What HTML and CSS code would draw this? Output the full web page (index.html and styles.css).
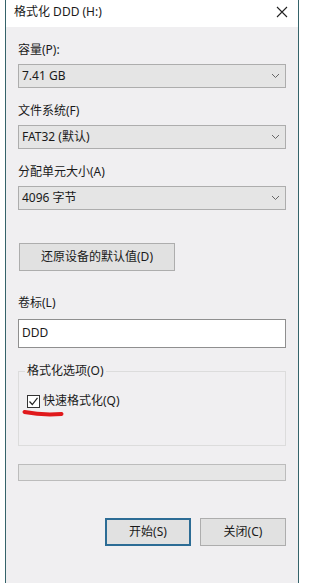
FILE: index.html
```html
<!DOCTYPE html>
<html lang="zh-CN">
<head>
  <meta charset="UTF-8" />
  <meta name="viewport" content="width=device-width, initial-scale=1.0" />
  <title>格式化 DDD (H:)</title>
  <link rel="stylesheet" href="styles.css">
</head>
<body>

  <section class="window">
    <div class="titlebar">
      <span class="title">格式化 DDD (H:)</span>
      <svg class="close" width="12" height="12" viewBox="0 0 12 12">
        <path d="M1 1 L11 11 M11 1 L1 11" stroke="#222" stroke-width="1.1" fill="none" />
      </svg>
    </div>

    <div class="content">
      <div class="field">
        <div class="label">容量(P):</div>
        <div class="combo">
          <span>7.41 GB</span>
          <svg class="chevron" width="9" height="6" viewBox="0 0 9 6"><path d="M1 1 L4.5 4.5 L8 1" stroke="#666" fill="none" /></svg>
        </div>
      </div>

      <div class="field">
        <div class="label">文件系统(F)</div>
        <div class="combo">
          <span>FAT32 (默认)</span>
          <svg class="chevron" width="9" height="6" viewBox="0 0 9 6"><path d="M1 1 L4.5 4.5 L8 1" stroke="#666" fill="none" /></svg>
        </div>
      </div>

      <div class="field">
        <div class="label">分配单元大小(A)</div>
        <div class="combo">
          <span>4096 字节</span>
          <svg class="chevron" width="9" height="6" viewBox="0 0 9 6"><path d="M1 1 L4.5 4.5 L8 1" stroke="#666" fill="none" /></svg>
        </div>
      </div>

      <button class="btn restore">还原设备的默认值(D)</button>

      <div class="field volume">
        <div class="label">卷标(L)</div>
        <div class="textbox">DDD</div>
      </div>

      <!-- 格式化选项 -->
      <fieldset class="options">
        <legend>格式化选项(O)</legend>
        <div class="check">
          <span class="box">
            <svg width="11" height="11" viewBox="0 0 11 11"><path d="M1.5 5.5 L4.3 8.5 L9.5 1.8" stroke="#222" stroke-width="1.2" fill="none" /></svg>
          </span>
          快速格式化(Q)
          <svg class="mark" width="42" height="10" viewBox="0 0 42 10">
            <path d="M2.5 4 Q 20 7.5 39.5 6" stroke="#e0191c" stroke-width="4" stroke-linecap="round" fill="none" />
          </svg>
        </div>
      </fieldset>

      <div class="progress"></div>

      <div class="actions">
        <button class="btn default">开始(S)</button>
        <button class="btn">关闭(C)</button>
      </div>
    </div>
  </section>

</body>
</html>
```

FILE: styles.css
```css
* {
  box-sizing: border-box;
}

body {
  margin: 0;
  background: #fff;
  color: #1a1a1a;
  font-family: "Noto Sans", "Noto Sans CJK SC", sans-serif;
  font-size: 12px;
  line-height: 16px;
}

.window {
  width: 294px;
  min-height: 100vh;
  margin-left: 5px;
  background: #f0eff1;
  border-left: 1px solid #35636a;
  border-right: 1px solid #35636a;
}

.titlebar {
  display: flex;
  align-items: center;
  justify-content: space-between;
  height: 27px;
  padding: 0 10px 3px 8px;
  background: #fff;
}

.content {
  padding: 15px 12px 0 12px;
}

.field {
  margin-bottom: 15px;
}

.label {
  height: 16px;
  margin-bottom: 6px;
}

.combo {
  display: flex;
  align-items: center;
  justify-content: space-between;
  height: 24px;
  padding: 0 5px 0 3px;
  background: #e5e5e5;
  border: 1px solid #adadad;
}

.btn {
  height: 28px;
  padding: 0;
  background: #e1e1e1;
  border: 1px solid #adadad;
  color: #1a1a1a;
  font: inherit;
}

.restore {
  width: 156px;
  margin: 33px 0 24px 1px;
  display: block;
}

.volume .label {
  margin-bottom: 8px;
}

.textbox {
  height: 29px;
  padding: 5px 3px;
  background: #fff;
  border: 1px solid #8f8f8f;
}

.options {
  margin: 0;
  padding: 0 6px 36px 6px;
  border: 1px solid #dcdcdc;
}

.options legend {
  padding: 0 2px;
  line-height: 16px;
}

.check {
  position: relative;
  display: flex;
  align-items: center;
  gap: 3px;
  margin: 14px 0 0 2px;
  height: 16px;
}

.box {
  display: flex;
  align-items: center;
  justify-content: center;
  width: 13px;
  height: 13px;
  background: #fff;
  border: 1px solid #333;
}

.mark {
  position: absolute;
  left: -5px;
  top: 15px;
}

.progress {
  height: 17px;
  margin-top: 18px;
  background: #e6e6e6;
  border: 1px solid #bcbcbc;
}

.actions {
  display: flex;
  justify-content: flex-end;
  gap: 9px;
  margin-top: 37px;
}

.actions .btn {
  width: 86px;
}

.actions .default {
  border: 2px solid #2c6c95;
}
```
